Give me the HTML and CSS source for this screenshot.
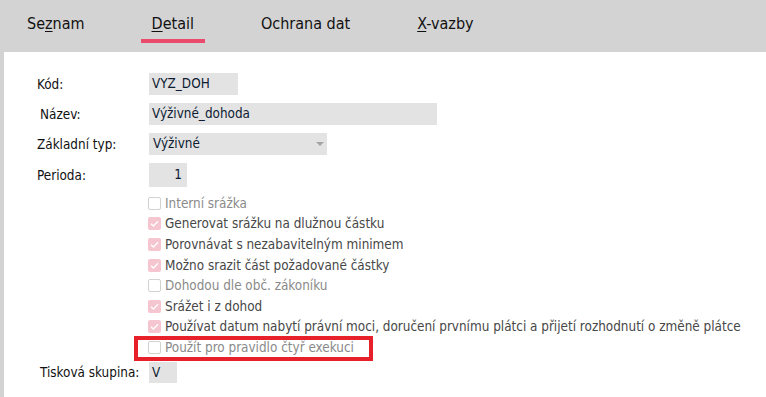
FILE: index.html
```html
<!DOCTYPE html>
<html lang="cs">
<head>
<meta charset="utf-8">
<link rel="stylesheet" href="styles.css">
</head>
<body>
<div class="app">
  <nav class="tabs">
    <div class="tab">Se<u>z</u>nam</div>
    <div class="tab tab-active"><u>D</u>etail</div>
    <div class="tab">Ochrana dat</div>
    <div class="tab"><u>X</u>-vazby</div>
  </nav>
  <main class="content">
    <div class="row row-kod">
      <div class="label">Kód:</div>
      <div class="field field-kod">VYZ_DOH</div>
    </div>
    <div class="row row-gap">
      <div class="label label-indent">Název:</div>
      <div class="field field-nazev">Výživné_dohoda</div>
    </div>
    <div class="row row-gap">
      <div class="label">Základní typ:</div>
      <div class="field field-select">Výživné<span class="arrow"></span></div>
    </div>
    <div class="row row-gap">
      <div class="label">Perioda:</div>
      <div class="field field-perioda">1</div>
    </div>
    <div class="checks">
      <div class="check off"><span class="box"></span>Interní srážka</div>
      <div class="check on"><span class="box"><svg viewBox="0 0 13 13"><path d="M3 6.8 L5.4 9 L10 4.2"/></svg></span>Generovat srážku na dlužnou částku</div>
      <div class="check on"><span class="box"><svg viewBox="0 0 13 13"><path d="M3 6.8 L5.4 9 L10 4.2"/></svg></span>Porovnávat s nezabavitelným minimem</div>
      <div class="check on"><span class="box"><svg viewBox="0 0 13 13"><path d="M3 6.8 L5.4 9 L10 4.2"/></svg></span>Možno srazit část požadované částky</div>
      <div class="check off"><span class="box"></span>Dohodou dle obč. zákoníku</div>
      <div class="check on"><span class="box"><svg viewBox="0 0 13 13"><path d="M3 6.8 L5.4 9 L10 4.2"/></svg></span>Srážet i z dohod</div>
      <div class="check on"><span class="box"><svg viewBox="0 0 13 13"><path d="M3 6.8 L5.4 9 L10 4.2"/></svg></span>Používat datum nabytí právní moci, doručení prvnímu plátci a přijetí rozhodnutí o změně plátce</div>
      <div class="check off highlighted"><span class="box"></span>Použít pro pravidlo čtyř exekuci<span class="mark"></span></div>
    </div>
    <div class="row row-tisk">
      <div class="label label-indent">Tisková skupina:</div>
      <div class="field field-tisk">V</div>
    </div>
  </main>
</div>
</body>
</html>
```
FILE: styles.css
```css
html, body {
  margin: 0;
  height: 100%;
}
body {
  background: #d3d3d3;
  font-family: "DejaVu Sans Condensed", "DejaVu Sans", sans-serif;
  font-size: 13.4px;
  color: #111;
}
.app {
  display: flex;
  flex-direction: column;
  height: 100%;
}
.tabs {
  height: 52px;
  flex: none;
  display: flex;
  align-items: flex-start;
  gap: 45px;
  padding: 14px 0 0 16px;
  box-sizing: border-box;
  background: #d3d3d3;
}
.tab {
  font-size: 16px;
  line-height: 20px;
  padding: 0 11px;
  color: #111;
  height: 29px;
  box-sizing: border-box;
}
.tab u {
  text-decoration-thickness: 1px;
  text-underline-offset: 2px;
}
.tab-active {
  border-bottom: 4px solid #ea4b6c;
}
.content {
  flex: 1;
  margin-left: 4px;
  background: #fff;
  padding: 21px 0 0 33px;
  position: relative;
}
.row {
  display: flex;
  align-items: center;
}
.row-gap {
  margin-top: 8px;
}
.label {
  width: 112px;
  flex: none;
}
.label-indent {
  padding-left: 3px;
  box-sizing: border-box;
}
.field {
  background: #e3e3e3;
  height: 22px;
  line-height: 22px;
  padding: 0 3px;
  box-sizing: border-box;
  color: #0d1b33;
  white-space: nowrap;
}
.field-kod { width: 89px; }
.field-nazev { width: 288px; }
.field-select {
  width: 178px;
  padding-left: 4px;
  position: relative;
}
.arrow {
  position: absolute;
  right: 3px;
  top: 9px;
  width: 0;
  height: 0;
  border-left: 4px solid transparent;
  border-right: 4px solid transparent;
  border-top: 4px solid #a4a4a4;
}
.field-perioda {
  width: 38px;
  height: 24px;
  line-height: 24px;
  text-align: right;
  padding-right: 5px;
}
.checks {
  margin-top: 6px;
  padding-left: 111px;
}
.check {
  height: 20.6px;
  display: flex;
  align-items: center;
  white-space: nowrap;
  position: relative;
}
.check .box {
  width: 13px;
  height: 13px;
  box-sizing: border-box;
  border-radius: 2px;
  margin-right: 4px;
  flex: none;
  display: flex;
}
.check.off .box {
  border: 1px solid #d2d2d2;
  background: #fff;
}
.check.on .box {
  background: #f6c6d0;
}
.check svg {
  width: 13px;
  height: 13px;
}
.check svg path {
  fill: none;
  stroke: #fff;
  stroke-width: 1.3;
}
.check.on { color: #474747; }
.check.off { color: #8a8a8a; }
.mark {
  position: absolute;
  left: -14px;
  top: -1px;
  width: 239px;
  height: 25px;
  border: 4px solid #e8202a;
  box-sizing: border-box;
  pointer-events: none;
}
.row-tisk {
  margin-top: 4px;
}
.field-tisk {
  width: 28px;
  height: 21px;
  line-height: 21px;
}
```
